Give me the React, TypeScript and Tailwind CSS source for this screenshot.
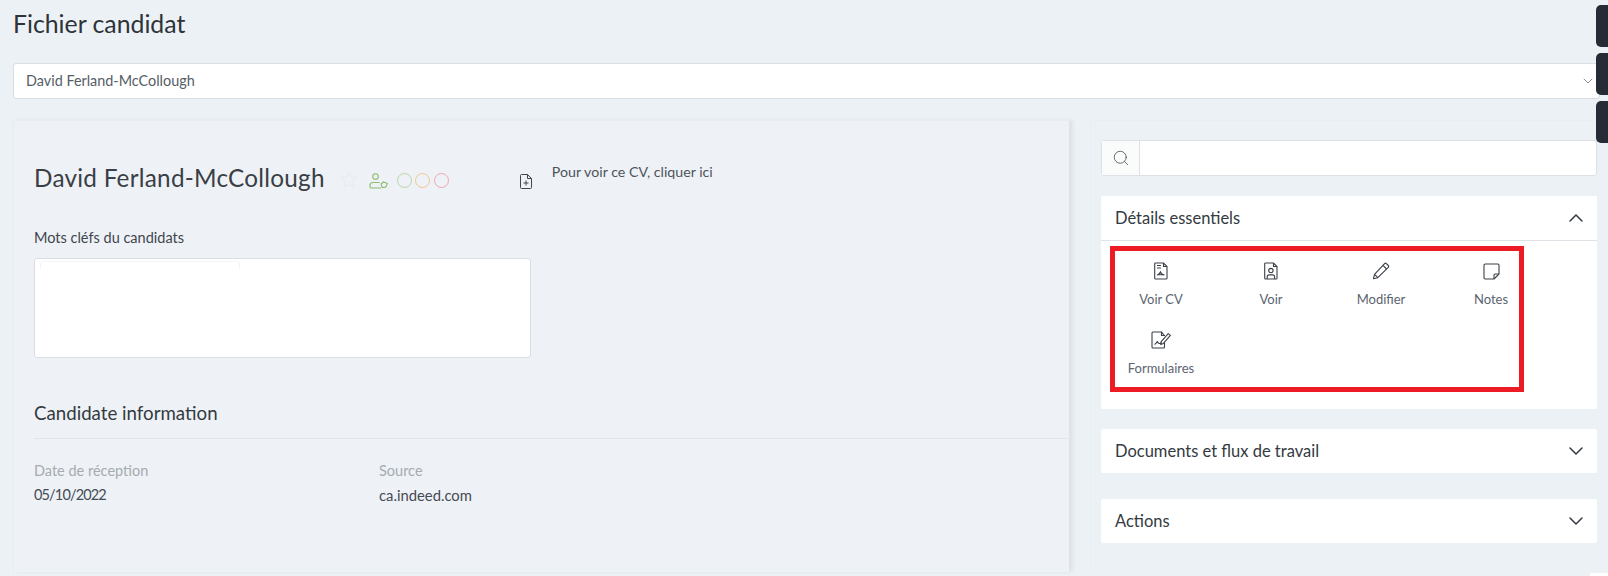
import { ChevronDown, ChevronUp, Search, Star } from "lucide-react";
import { ReactNode } from "react";

function VoirCvIcon() {
  return (
    <svg width="18" height="18" viewBox="0 0 18 18" fill="none" stroke="#3a4048" strokeWidth="1.1">
      <path d="M3.500 1h8l3.500 3.500v11.700a.8.8 0 0 1-.8.8H3.500a.8.8 0 0 1-.8-.8V1.800a.8.8 0 0 1 .8-.8z" />
      <path d="M11.500 1v3.500H15" />
      <path d="M5 3.500h4M5 6h4" />
      <path d="M5 13c1.800-.3 2.700-1.300 3.400-3 .5 1.600 1.500 2.700 4.100 3M6 12.800h5" />
    </svg>
  );
}

function VoirIcon() {
  return (
    <svg width="18" height="18" viewBox="0 0 18 18" fill="none" stroke="#3a4048" strokeWidth="1.1">
      <path d="M3.500 1h8l3.500 3.500v11.700a.8.8 0 0 1-.8.8H3.500a.8.8 0 0 1-.8-.8V1.800a.8.8 0 0 1 .8-.8z" />
      <path d="M11.500 1v3.500H15" />
      <circle cx="8.900" cy="8.600" r="2.200" />
      <path d="M5.200 17v-2.100c0-1.200 1-2 2-2h3.400c1 0 2 .8 2 2V17" />
    </svg>
  );
}

function ModifierIcon() {
  return (
    <svg width="18" height="18" viewBox="0 0 18 18" fill="none" stroke="#3a4048" strokeWidth="1.1" strokeLinejoin="round">
      <path d="M12.600 1.600a1.300 1.300 0 0 1 1.800 0l1.900 1.900a1.300 1.300 0 0 1 0 1.800L5.800 15.700l-4.300 1 1-4.300z" />
      <path d="M11 3.400l3.600 3.600M2.500 12.400l3.300 3.300" />
    </svg>
  );
}

function NotesIcon() {
  return (
    <svg width="17" height="17" viewBox="0 0 17 17" fill="none" stroke="#3a4048" strokeWidth="1.1" strokeLinejoin="round">
      <path d="M2.200 1h12.600a1.200 1.200 0 0 1 1.200 1.200V11l-5 5H2.200A1.200 1.200 0 0 1 1 14.800V2.200A1.200 1.200 0 0 1 2.200 1z" />
      <path d="M16 11h-3.800a1.200 1.200 0 0 0-1.200 1.200V16" />
    </svg>
  );
}

function FormulairesIcon() {
  return (
    <svg width="21" height="18" viewBox="0 0 21 18" fill="none" stroke="#3a4048" strokeWidth="1.1" strokeLinejoin="round">
      <path d="M10.500 1H2a1 1 0 0 0-1 1v14a1 1 0 0 0 1 1h10.500a1 1 0 0 0 1-1v-4.500" />
      <path d="M10.500 1v3.500H13.500L10.500 1z" />
      <path d="M3.500 13.500c1.500-.5 2-1.500 2.800-3 .4 1.200 1 1.800 1.800 2 1 .2 1.900-.3 2.600-1" />
      <path d="M17.200 2.600l2.200 1.800-7 8-2.800 1 .6-2.800z" />
    </svg>
  );
}

function ActionItem({ icon, label }: { icon: ReactNode; label: string }) {
  return (
    <div className="flex h-[69px] flex-col items-center">
      <div className="flex h-[18px] items-center justify-center">{icon}</div>
      <span className="mt-[10px] text-[13px] leading-[18px] text-[#5b6470]">{label}</span>
    </div>
  );
}

function CollapsedCard({ title }: { title: string }) {
  return (
    <div className="flex h-[44px] items-center justify-between rounded-[2px] bg-white pl-[14px] pr-[9px]">
      <span className="text-[16.500px] text-[#343a40]">{title}</span>
      <ChevronDown size={24} strokeWidth={1.500} className="text-[#343a40]" />
    </div>
  );
}

export default function App() {
  return (
    <div
      className="relative h-[576px] w-[1608px] overflow-hidden bg-[#ecf1f6] pl-[13px] pr-[8px] text-[#343a40]"
      style={{ fontFamily: '"Lato", "Noto Sans", sans-serif' }}
    >
      <h1 className="pt-[7px] text-[24.800px] leading-[33px] text-[#2e3338]">Fichier candidat</h1>

      <div className="mt-[23px] flex h-[36px] items-center justify-between rounded-[3px] border border-[#d9dee3] bg-white pl-[12px] pr-[3px] text-[14.400px] text-[#555d66]">
        <span>David Ferland-McCollough</span>
        <ChevronDown size={16} strokeWidth={1.200} className="text-[#6b7580]" />
      </div>

      <div className="flex">
        <div className="mt-[21px] h-[452px] w-[1056px] border-l border-t border-[#e8ecf0] bg-[#eef2f7] pt-[37px] shadow-[4px_0_4px_rgba(0,0,0,0.06)]">
          <div className="flex h-[40px] items-center pl-[20px]">
            <span className="text-[24.300px] leading-[36px] tracking-[0.25px] text-[#3a3f45]">David Ferland-McCollough</span>
            <Star size={18} strokeWidth={1} className="ml-[15px] mt-[3px] text-[#e2e5e8]" />
            <svg className="ml-[11px] mt-[5px]" width="19" height="16" viewBox="0 0 19 16" fill="none" stroke="#8cbb6e" strokeWidth="1.100">
              <circle cx="6.500" cy="3.500" r="2.800" />
              <path d="M12 15H2.200c-.7 0-1.200-.5-1.200-1.200v-1.300c0-1.700 1.300-3 3-3h6.500" />
              <path d="M12 11l2.500-2 3.800 1.600-1.600 3.600-3.500.2z" />
            </svg>
            <div className="ml-[9px] mt-[5px] flex gap-[3.500px]">
              <span className="h-[15px] w-[15px] rounded-full border border-[#bcd4a6]" />
              <span className="h-[15px] w-[15px] rounded-full border border-[#eec58f]" />
              <span className="h-[15px] w-[15px] rounded-full border border-[#eba9a9]" />
            </div>
            <svg className="ml-[71px] mt-[6px]" width="12" height="15" viewBox="0 0 12 15" fill="none" stroke="#3f4650" strokeWidth="1">
              <path d="M1.500.5h6l4 4v9a1 1 0 0 1-1 1h-9a1 1 0 0 1-1-1v-12a1 1 0 0 1 1-1z" />
              <path d="M7.500.5v4h4M6 6.500v5M3.500 9h5" />
            </svg>
            <span className="ml-[20px] -mt-[13px] whitespace-nowrap text-[14.200px] text-[#4c535b]">Pour voir ce CV, cliquer ici</span>
          </div>

          <div className="pl-[20px] pt-[30px]">
            <p className="text-[14.500px] leading-[20px] text-[#3f454c]">Mots cléfs du candidats</p>
            <div className="mt-[10px] h-[100px] w-[497px] rounded-[3px] border border-[#d9dee3] bg-white pl-[5px] pt-[2px]">
              <div className="h-[8px] w-[200px] rounded-t-[3px] border border-b-0 border-[#f4f5f6]" />
            </div>
          </div>

          <div className="pl-[20px] pt-[42px]">
            <h2 className="text-[18.700px] leading-[27px] text-[#343a40]">Candidate information</h2>
            <div className="mt-[11px] border-t border-[#e2e6ea]" />
            <div className="flex pt-[20px] text-[14.500px] leading-[24px]">
              <div className="w-[345px]">
                <p className="text-[#a5abb0]">Date de réception</p>
                <p className="tracking-[-0.85px] text-[#454b52]">05/10/2022</p>
              </div>
              <div>
                <p className="text-[#a5abb0]">Source</p>
                <p className="text-[14.800px] text-[#454b52]">ca.indeed.com</p>
              </div>
            </div>
          </div>
        </div>

        <div className="ml-[21px] mt-[21px] h-[452px] w-[510px] border-l border-t border-[#e9eef3] pl-[10px] pt-[19px]">
          <div className="w-[496px]">
            <div className="flex h-[36px] rounded-[3px] border border-[#dde1e5] bg-white">
              <div className="flex w-[38px] items-center justify-center border-r border-[#dde1e5] bg-[#fafbfb]">
                <Search size={18} strokeWidth={1.100} className="text-[#4b535c]" />
              </div>
            </div>

            <div className="mt-[20px] h-[213px] rounded-[2px] bg-white">
              <div className="flex h-[45px] items-center justify-between border-b border-[#dfe3e7] pl-[14px] pr-[9px]">
                <span className="text-[16.500px] text-[#343a40]">Détails essentiels</span>
                <ChevronUp size={24} strokeWidth={1.500} className="text-[#343a40]" />
              </div>
              <div className="ml-[9px] mt-[5px] h-[146px] w-[414px] border-[5px] border-[#ed1c24] pt-[11px]">
                <div className="grid grid-cols-[repeat(4,90px)] gap-x-[20px] pl-[1px]">
                  <ActionItem icon={<VoirCvIcon />} label="Voir CV" />
                  <ActionItem icon={<VoirIcon />} label="Voir" />
                  <ActionItem icon={<ModifierIcon />} label="Modifier" />
                  <ActionItem icon={<NotesIcon />} label="Notes" />
                  <ActionItem icon={<FormulairesIcon />} label="Formulaires" />
                </div>
              </div>
            </div>

            <div className="mt-[20px]">
              <CollapsedCard title="Documents et flux de travail" />
            </div>
            <div className="mt-[26px]">
              <CollapsedCard title="Actions" />
            </div>
          </div>
        </div>
      </div>

      <div className="absolute right-0 top-[5px] h-[42px] w-[12px] rounded-l-[5px] bg-[#252c35]" />
      <div className="absolute right-0 top-[53px] h-[42px] w-[12px] rounded-l-[5px] bg-[#252c35]" />
      <div className="absolute right-0 top-[101px] h-[42px] w-[12px] rounded-l-[5px] bg-[#252c35]" />
      <div className="absolute bottom-0 right-0 h-[3px] w-[18px] bg-white" />
    </div>
  );
}
